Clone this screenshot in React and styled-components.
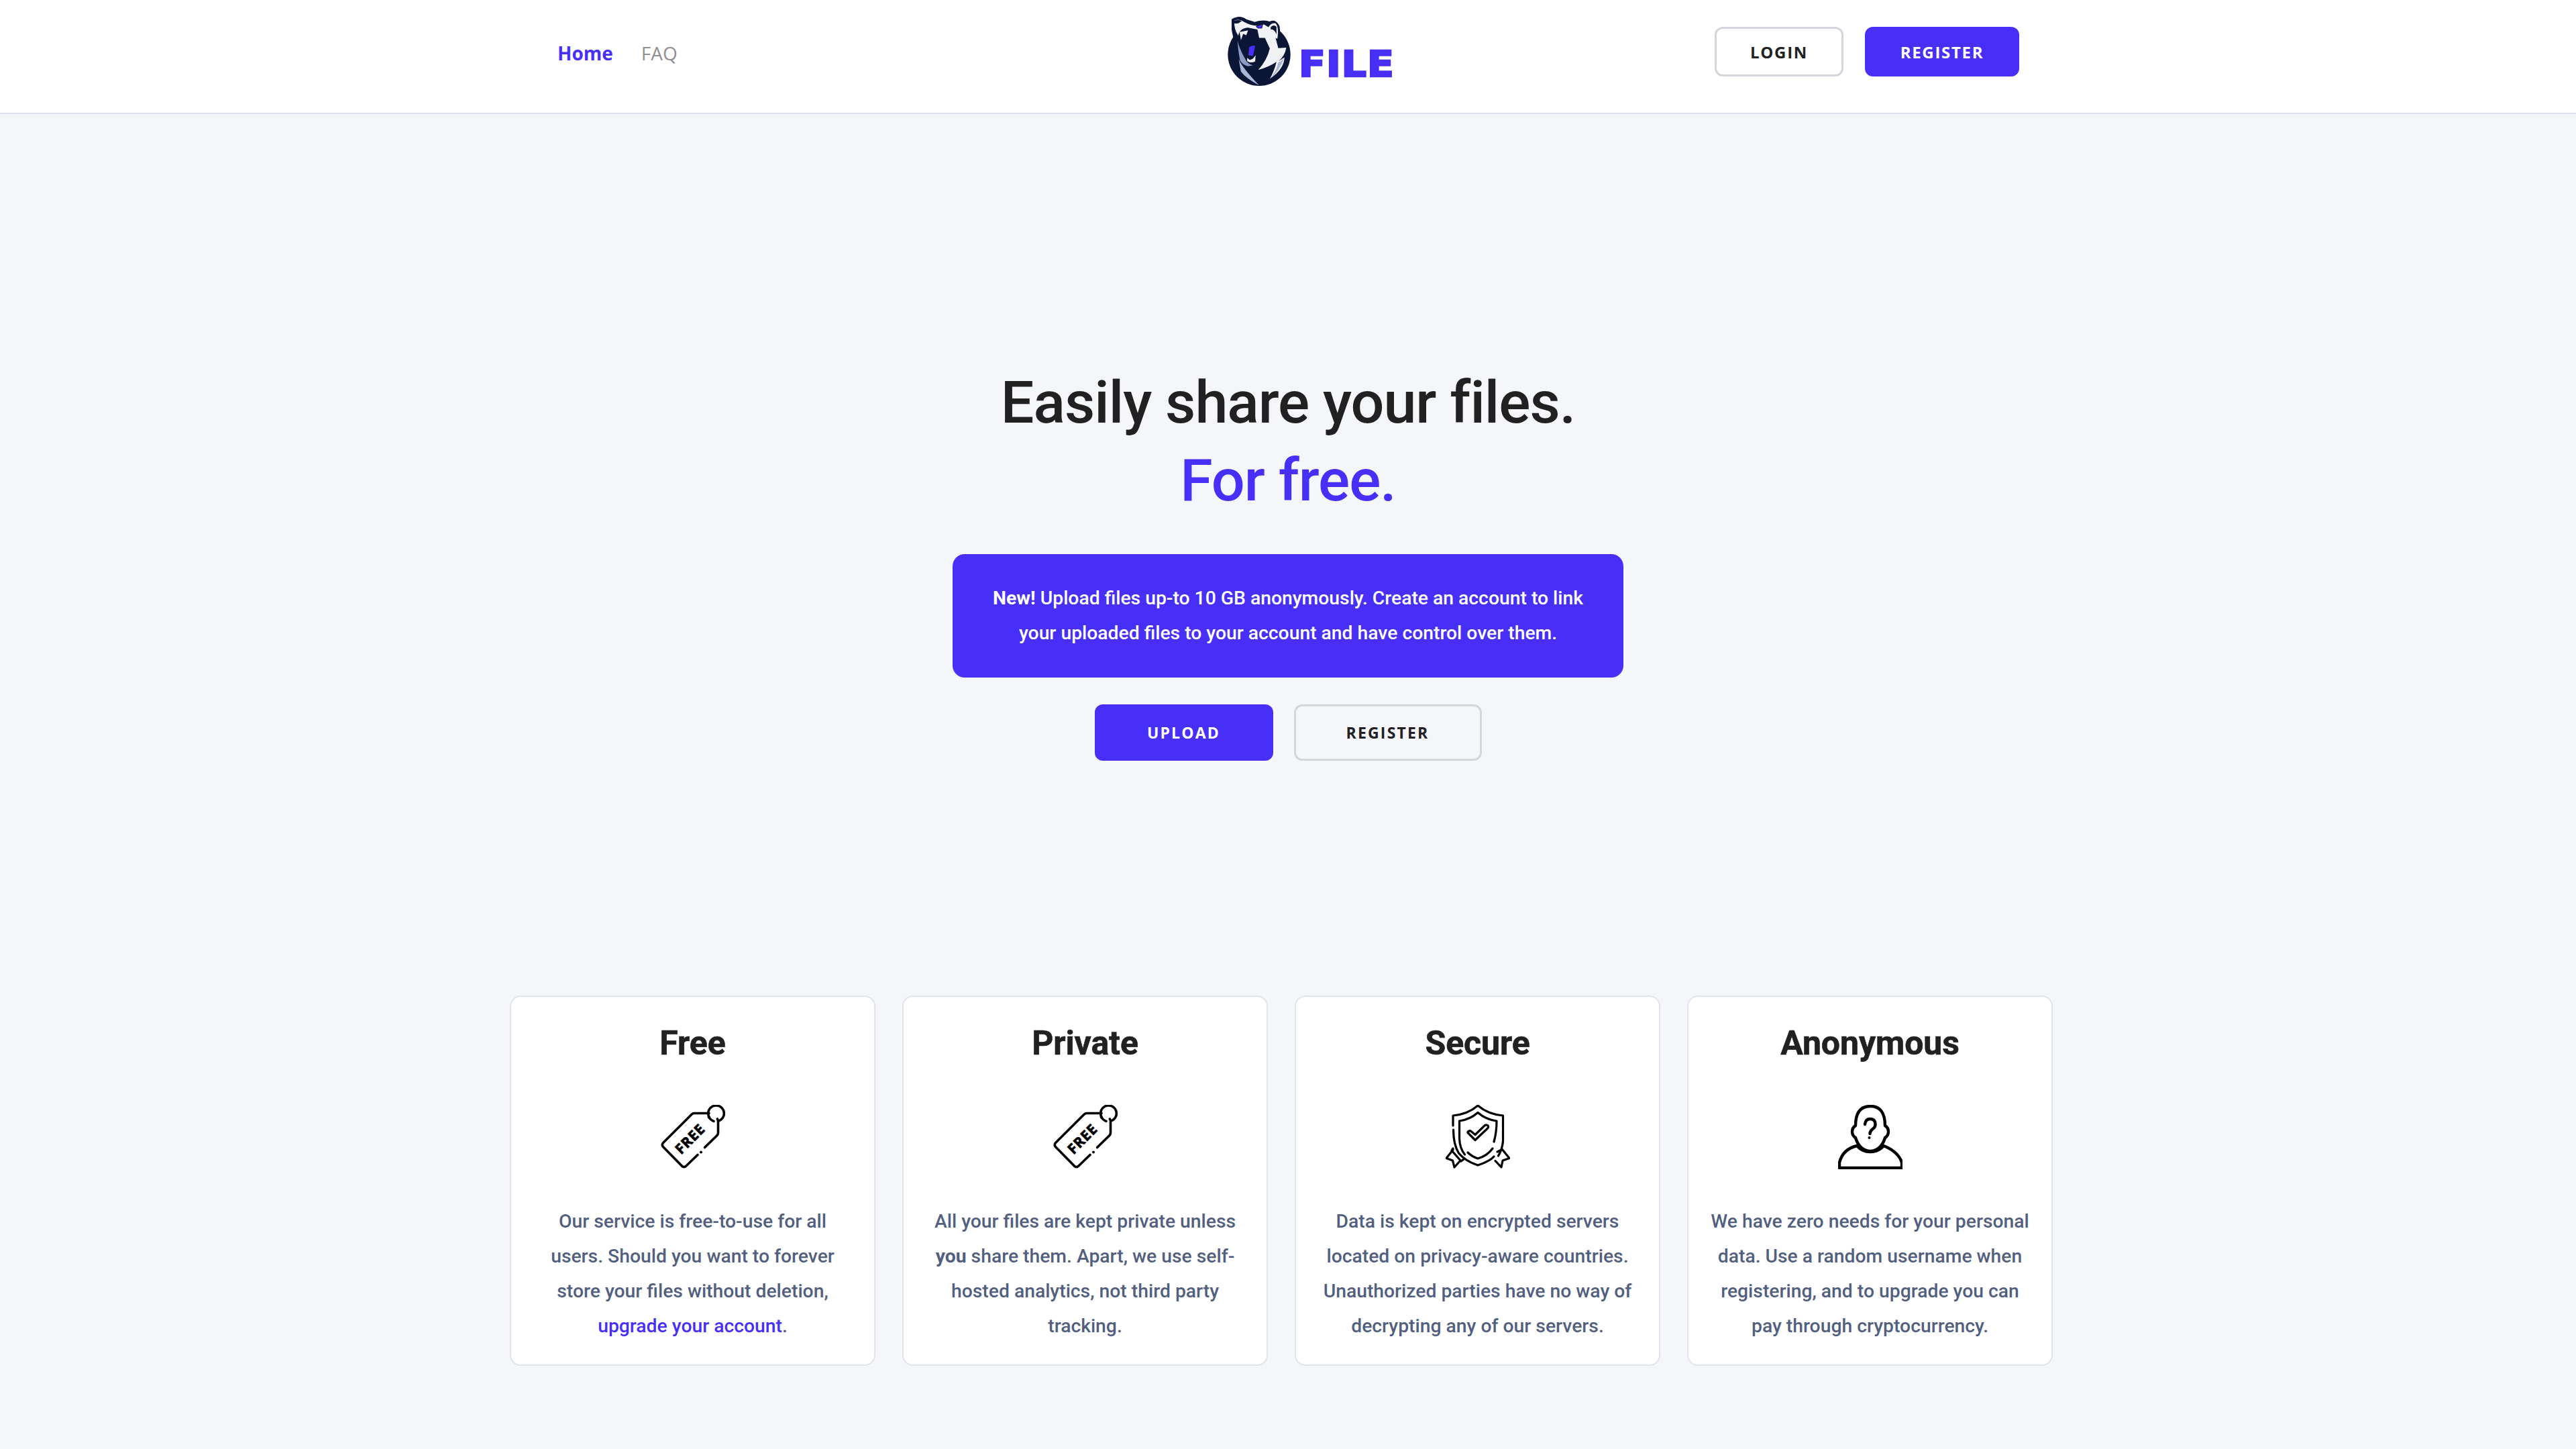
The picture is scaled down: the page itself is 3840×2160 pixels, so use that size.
import React from "react";
import styled, { createGlobalStyle } from "styled-components";

const PURPLE = "#482ff7";

const Global = createGlobalStyle`
  html, body { margin: 0; padding: 0; background: #f4f6fa; }
  * { box-sizing: border-box; }
  body { font-family: "Roboto", "Liberation Sans", sans-serif; }
`;

const Page = styled.div`
  width: 3840px;
  height: 2160px;
  overflow: hidden;
  background: #f4f6fa;
`;

const Header = styled.header`
  height: 170px;
  background: #fff;
  border-bottom: 2px solid #dfe1ea;
  padding: 0 830px 0 831px;
  display: grid;
  grid-template-columns: 999px 247px 1fr;
  align-items: center;
`;

const NavLinks = styled.nav`
  display: flex;
  align-items: center;
  gap: 42px;
  margin-top: -11px;
`;

const NavLink = styled.a`
  font-family: "Open Sans", sans-serif;
  font-size: 28px;
  line-height: 38px;
  font-weight: ${(p) => (p.$active ? 700 : 400)};
  color: ${(p) => (p.$active ? PURPLE : "#8f8f8f")};
`;

const Logo = styled.div`
  display: flex;
  align-items: flex-end;
  gap: 12px;
  height: 106px;
  margin-top: -17px;
`;

const LogoMark = styled.svg`
  display: block;
  width: 94px;
  height: 106px;
  flex: none;
`;

const LogoWord = styled.span`
  font-family: "DejaVu Sans", sans-serif;
  font-size: 53px;
  line-height: 38px;
  height: 38px;
  margin-bottom: 14px;
  font-weight: 700;
  color: ${PURPLE};
  letter-spacing: 1px;
  display: inline-block;
  -webkit-text-stroke: 2.5px ${PURPLE};
  transform: scaleX(1.1);
  transform-origin: left center;
`;

const AuthButtons = styled.div`
  display: flex;
  justify-content: flex-end;
  gap: 32px;
  margin-top: -14px;
`;

const Button = styled.a`
  display: flex;
  align-items: center;
  justify-content: center;
  font-family: "Open Sans", sans-serif;
  font-weight: 700;
  letter-spacing: ${(p) => (p.$large ? "2.2px" : "1.7px")};
  font-size: ${(p) => (p.$large ? "23px" : "24px")};
  width: ${(p) => p.$w}px;
  height: ${(p) => (p.$large ? 84 : 74)}px;
  border-radius: 12px;
  color: ${(p) => (p.$primary ? "#fff" : "#212121")};
  background: ${(p) => (p.$primary ? PURPLE : p.$large ? "#f4f6fa" : "#fff")};
  border: ${(p) => (p.$primary ? "none" : "3px solid #d4d6dc")};
`;

const Hero = styled.section`
  padding-top: 372px;
  display: flex;
  flex-direction: column;
  align-items: center;
`;

const HeroTitle = styled.h1`
  margin: 0;
  font-family: "Roboto", sans-serif;
  font-size: 88px;
  line-height: 116px;
  font-weight: 500;
  letter-spacing: -1px;
  color: #212121;
  text-align: center;
`;

const Accent = styled.span`
  display: block;
  color: ${PURPLE};
`;

const Notice = styled.div`
  margin-top: 52px;
  width: 1000px;
  height: 184px;
  border-radius: 18px;
  background: ${PURPLE};
  color: #fff;
  font-size: 28.3px;
  font-weight: 500;
  line-height: 52px;
  text-align: center;
  padding: 40px 30px;
  b { font-weight: 700; }
`;

const Actions = styled.div`
  margin-top: 40px;
  display: flex;
  gap: 31px;
`;

const Features = styled.section`
  margin: 350px 0 0 760px;
  width: 2300px;
  display: grid;
  grid-template-columns: repeat(4, 1fr);
  gap: 40px;
`;

const Card = styled.article`
  height: 552px;
  background: #fff;
  border: 2px solid #e2e4ec;
  border-radius: 16px;
  padding: 40px 31px 0;
  text-align: center;
`;

const CardTitle = styled.h3`
  margin: 0;
  font-size: 50px;
  line-height: 58px;
  font-weight: 700;
  letter-spacing: -0.1px;
  color: #212121;
  -webkit-text-stroke: 0.6px #212121;
`;

const IconWrap = styled.div`
  margin-top: 63px;
  height: 96px;
  display: flex;
  justify-content: center;
  svg { display: block; width: 96px; height: 96px; }
`;

const CardText = styled.p`
  margin: 52px 0 0;
  font-size: 28.3px;
  line-height: 52px;
  font-weight: 500;
  color: #525f7f;
  b { font-weight: 700; }
  a { color: ${PURPLE}; }
`;

const TagIcon = () => (
  <svg viewBox="0 0 96 96" fill="none" stroke="#000" strokeWidth="3.6" strokeLinecap="round" strokeLinejoin="round">
    <path d="M72 12.500H50q-2.200 0-4 1.800L3.600 56.500q-2.600 3-.2 6l28 28.600q3.200 3 6.200.2L55 74.500" />
    <path d="M65.500 63.500 83.500 46q2-2 2-4.500V25q0-2.200-1.200-4" />
    <path d="M72.500 19a11.800 11.800 0 1 1 13.500 5" />
    <path d="M71.500 18.500q4 5 7.500 5.800" />
    <circle cx="60" cy="70.500" r="2" fill="#000" stroke="none" />
    <text x="44" y="58" transform="rotate(-45 44 51)" textAnchor="middle" fill="#000" stroke="#000" strokeWidth="0.8" fontFamily="Open Sans, sans-serif" fontWeight="700" fontSize="21" letterSpacing="1">FREE</text>
  </svg>
);

const ShieldIcon = () => (
  <svg viewBox="0 0 96 96" fill="none" stroke="#000" strokeWidth="3.2" strokeLinecap="round" strokeLinejoin="round">
    <path d="M11 31V16q22-2 37-15 15 13 37.500 15v38q-1 12-7 22" />
    <path d="M11.500 37q0 22 8 35 10 12 28.500 18 18-6 24-13" />
    <path d="M72 55q4-14 4-31-16-2-28-12.500Q36 22 20.500 24v26q.5 15 8 24" />
    <path d="M33 71q6 6 15 9 14-4 22-15" />
    <path d="M33.500 42 44 52.500 62.500 35q2-2 .5-4-2-2-4.500-.5L44 44.500 38 39.500q-2-1.500-4 0-2 1 -.5 2.500Z" />
    <path d="M11 67 1 79.500l9.500 3.500 2.500 10 9-10" />
    <path d="M11 65l-2 3 14 16 4-3" />
    <path d="M84 66 95 79.500 85 83l-2 10-9-9.500" />
    <path d="M77 70l6-3" />
  </svg>
);

const PersonIcon = () => (
  <svg viewBox="0 0 96 96" fill="none" stroke="#000" strokeWidth="4.400" strokeLinecap="round" strokeLinejoin="round">
    <path d="M26 31q-5 3-5 9t5 9q3 10 9 15 6 5 13 5t13-5q6-5 9-15 5-3 5-9t-5-9q0-29-22-29T26 31Z" />
    <path d="M28 61Q7 66 2 86v8h93V86Q90 70 68 61q-8 9-20 9t-20-9Z" />
    <path d="M40 29q1-8 7.500-8 7.500 0 8 7 .5 5-4 8-4 3-4 7" />
    <circle cx="46.500" cy="49" r="2" fill="#000" stroke="none" />
  </svg>
);

const BearMark = () => (
  <LogoMark viewBox="208 68 284 318">
    <circle cx="350" cy="243" r="141" fill="#0b1535" />
    <path d="M226 84Q262 62 292 84L330 96Q368 84 398 94Q426 80 442 116L448 176L420 250L258 250Q232 170 226 130Z" fill="#0b1535" />
    <path d="M238 90Q262 80 282 96Q330 122 372 108L392 120Q404 98 424 102Q440 118 432 172L424 168L436 214L472 212Q466 250 438 272L464 256Q462 310 398 352Q418 318 428 276Q392 300 346 312Q386 268 398 216L376 168L350 168L342 130L300 122Q262 124 256 158Q236 130 238 90Z" fill="#f1f2f6" />
    <path d="M398 352Q438 324 464 256Q450 276 436 278Q428 320 398 352Z" fill="#a9b6d4" />
    <path d="M234 92Q256 84 272 92L256 102L240 104Z" fill="#0b1535" />
    <path d="M336 116L366 106 362 124 344 124Z" fill={PURPLE} stroke="#0b1535" strokeWidth="3" />
    <path d="M402 120Q416 106 428 118L428 152Q418 128 402 130Z" fill="#0b1535" />
    <path d="M258 160Q262 134 298 134L326 176 352 226 338 268Q310 282 292 270Q258 220 258 160Z" fill="#0b1535" />
    <path d="M262 142L300 134 292 156 278 150 268 178Z" fill="#f1f2f6" />
    <path d="M296 258L308 268 322 262 334 246 332 274Q312 284 296 272Z" fill="#f1f2f6" />
    <path d="M305 210Q320 200 332 204L322 250 302 246Z" fill={PURPLE} />
    <path d="M252 180Q262 220 288 264Q296 284 322 292L300 296Q276 290 264 270Q256 230 252 180Z" fill="#8b9bc4" />
    <path d="M258 264Q272 300 350 382Q290 350 268 320Z" fill="#a9b6d4" />
  </LogoMark>
);

const features = [
  { title: "Free", icon: <TagIcon />, body: <>Our service is free-to-use for all users. Should you want to forever store your files without deletion, <a>upgrade your account</a>.</> },
  { title: "Private", icon: <TagIcon />, body: <>All your files are kept private unless <b>you</b> share them. Apart, we use self-hosted analytics, not third party tracking.</> },
  { title: "Secure", icon: <ShieldIcon />, body: <>Data is kept on encrypted servers located on privacy-aware countries. Unauthorized parties have no way of decrypting any of our servers.</> },
  { title: "Anonymous", icon: <PersonIcon />, body: <>We have zero needs for your personal data. Use a random username when registering, and to upgrade you can pay through cryptocurrency.</> },
];

export default function App() {
  return (
    <Page>
      <Global />
      <Header>
        <NavLinks>
          <NavLink $active>Home</NavLink>
          <NavLink>FAQ</NavLink>
        </NavLinks>
        <Logo>
          <BearMark />
          <LogoWord>FILE</LogoWord>
        </Logo>
        <AuthButtons>
          <Button $w={192}>LOGIN</Button>
          <Button $w={230} $primary>REGISTER</Button>
        </AuthButtons>
      </Header>
      <Hero>
        <HeroTitle>
          Easily share your files.
          <Accent>For free.</Accent>
        </HeroTitle>
        <Notice>
          <b>New!</b> Upload files up-to 10 GB anonymously. Create an account to link
          <br />
          your uploaded files to your account and have control over them.
        </Notice>
        <Actions>
          <Button $w={266} $large $primary>UPLOAD</Button>
          <Button $w={280} $large>REGISTER</Button>
        </Actions>
      </Hero>
      <Features>
        {features.map((f) => (
          <Card key={f.title}>
            <CardTitle>{f.title}</CardTitle>
            <IconWrap>{f.icon}</IconWrap>
            <CardText>{f.body}</CardText>
          </Card>
        ))}
      </Features>
    </Page>
  );
}
